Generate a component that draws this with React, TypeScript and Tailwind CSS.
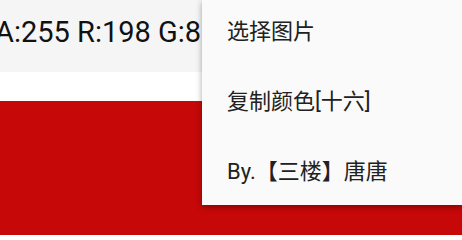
const menuItems = ["选择图片", "复制颜色[十六]", "By.【三楼】唐唐"];

const App = () => {
  return (
    <div className="relative w-[462px] h-[235px] overflow-hidden flex flex-col bg-white font-['Roboto','Noto_Sans_CJK_SC',sans-serif]">
      <div className="h-[72px] bg-[#f5f5f5] pt-[18px] whitespace-nowrap">
        <p className="text-[29px] leading-[29px] text-[#111111] -ml-[5px]">
          A:255 R:198 G:8 B:8
        </p>
      </div>
      <div className="h-[29px] bg-white" />
      <div className="flex-1 bg-[#c60808]" />

      <div className="absolute left-[202px] top-0 right-0 h-[205px] bg-[#fafafa] shadow-[0_2px_6px_rgba(0,0,0,0.35)]">
        <div className="-mt-[3px] flex flex-col">
          {menuItems.map((item) => (
            <div
              key={item}
              className="h-[70px] flex items-center pl-[25px] text-[22px] leading-none text-[#212121] whitespace-nowrap"
            >
              {item}
            </div>
          ))}
        </div>
      </div>
    </div>
  );
};

export default App;
